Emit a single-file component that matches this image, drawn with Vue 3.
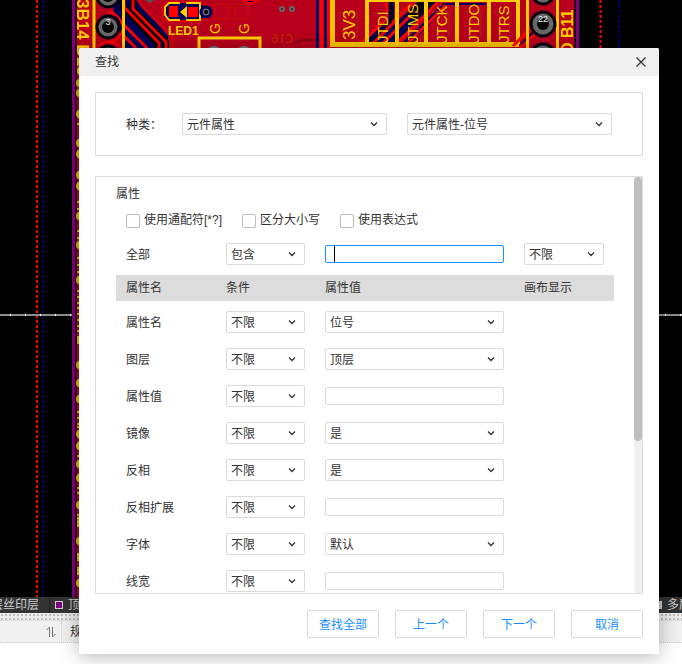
<script setup>
import { reactive } from 'vue'

const rows = reactive([
  { name: '属性名', value: '位号', select: true },
  { name: '图层', value: '顶层', select: true },
  { name: '属性值', value: '', select: false },
  { name: '镜像', value: '是', select: true },
  { name: '反相', value: '是', select: true },
  { name: '反相扩展', value: '', select: false },
  { name: '字体', value: '默认', select: true },
  { name: '线宽', value: '', select: false },
])
const options = ['使用通配符[*?]', '区分大小写', '使用表达式']
const actions = ['查找全部', '上一个', '下一个', '取消']

const pins = [
  { x: 388, name: 'JTDI' },
  { x: 418, name: 'JTMS' },
  { x: 447, name: 'JTCK' },
  { x: 479, name: 'JTDO' },
  { x: 509, name: 'JTRS' },
]
const walls = [367, 397, 426, 457, 489, 518]
const rounds = [83, 93, 114, 143, 154, 175, 186, 216, 245, 280, 365, 383, 399, 434, 446, 464, 478, 505, 541, 583]
const bars = [124, 202, 209, 231, 238, 258, 265, 272, 291, 297, 303, 308, 314, 320, 326, 331, 412, 418, 424, 427, 456, 488, 493, 515, 518]
const blocks = [336, 519, 553, 567]
</script>

<template>
  <div class="editor">
    <main class="canvas">
      <svg class="board" viewBox="0 0 682 597" preserveAspectRatio="xMinYMin slice" aria-hidden="true">
        <rect width="682" height="597" fill="#000" />
        <path d="M37 0V597M600.500 0V597" stroke="#f00" stroke-width="2" stroke-dasharray="3 2" />
        <path d="M43 0V597M619 0V597" stroke="#000066" stroke-width="2" stroke-dasharray="3 2" />
        <path d="M0 315H682" stroke="#8c8c8c" stroke-width="2" />
        <path d="M10 315H72M650 315H682" stroke="#fff" stroke-width="2" stroke-dasharray="1 14" />
        <rect x="72" width="507" height="597" fill="#800080" />
        <rect x="75" width="501" height="597" fill="#250018" />
        <rect x="77" width="497" height="597" fill="#b8001c" />
        <g fill="#e8b400">
          <ellipse v-for="y in rounds" :key="y" cx="79" :cy="y" rx="3" ry="4" />
          <rect v-for="y in bars" :key="y" x="77" :y="y - 1" width="3" height="2" />
          <rect v-for="y in blocks" :key="y" x="77" :y="y" width="3" height="8" />
        </g>

        <!-- left routing -->
        <path d="M112 0H137L168 36V48H125L114 12Z" fill="#000058" />
        <g fill="none" stroke="#000" stroke-width="6">
          <path d="M133 0V9L166 42V48" />
          <path d="M122 0V6L158 44V48" />
        </g>
        <g fill="none" stroke="#f00" stroke-width="3">
          <path d="M133 0V9L166 42V48" />
          <path d="M124 0V7L159 43V48" />
          <path d="M121 22L147 48" />
          <path d="M121 33L136 48" />
          <path d="M108 12C116 12 122 20 123 27C122 36 116 42 108 42M98 46C103 41 113 40 119 46" stroke-width="2" />
        </g>
        <path d="M138 0L143 7L172 36V48" fill="none" stroke="#d4000c" stroke-width="3" />
        <path d="M94 0V48M123.500 0V48" stroke="#fc0" stroke-width="3" />
        <g fill="#686868" stroke="#080010" stroke-width="3">
          <circle cx="108" cy="-4" r="11" />
          <circle cx="108" cy="27" r="11" />
          <circle cx="108" cy="57" r="11" />
        </g>
        <g fill="#080808">
          <circle cx="108" cy="-4" r="6" />
          <circle cx="108" cy="27" r="6" />
        </g>
        <text x="108" y="25" class="pin">3</text>
        <text class="silk bold" transform="translate(77 -1) rotate(90)">3B14 B13</text>

        <!-- LED footprint -->
        <path d="M145 0H154L150 3Z" fill="#555" />
        <path d="M168 2H198L207 6V18L198 21H168L163 17V6Z" fill="#000058" stroke="#e0000c" stroke-width="2" />
        <path d="M180 3H169L165 7V15L169 20H180M186 3H200V20H186" fill="none" stroke="#fc0" stroke-width="2" />
        <path d="M169 6H178V17H169ZM188 7H198V17H188Z" fill="#f00" />
        <path d="M180 12L187 6V18Z" fill="#fc0" />
        <circle cx="206" cy="12" r="5" fill="#686868" stroke="#000058" stroke-width="3" />
        <circle cx="206" cy="12" r="2" fill="#000" />
        <text x="168" y="35" class="silk led">LED1</text>
        <g fill="none" stroke="#c91000" stroke-width="1">
          <path d="M215 4H228V19H215ZM235 4H248V19H235ZM222 19L214 28M228 8H235" />
        </g>
        <path d="M244 0C245 4 255 4 257 0Z" fill="#000066" stroke="#f00" stroke-width="2" />
        <text class="silk" transform="translate(220 34) rotate(-90)">G</text>
        <text class="silk" transform="translate(249 34) rotate(-90)">G</text>
        <path d="M199 48V38H260V48" fill="none" stroke="#fc0" stroke-width="3" />
        <ellipse cx="214" cy="50" rx="6" ry="4" fill="#777" />
        <ellipse cx="244" cy="50" rx="6" ry="4" fill="#777" />
        <g fill="#222" stroke="#686868" stroke-width="2">
          <circle cx="282" cy="9" r="2" /><circle cx="292" cy="9" r="2" />
        </g>
        <text class="mirrored" transform="translate(293 43) scale(-1 1)">C16</text>
        <path d="M295 43L302 40H330" fill="none" stroke="#850012" stroke-width="2" />

        <!-- header connector -->
        <path d="M317.500 0V48M325.500 0V48" stroke="#000066" stroke-width="3" />
        <path d="M321.500 0V48M329 0V48" stroke="#f00" stroke-width="4" />
        <path d="M360 43L386 18V2H394V22L372 43ZM376 43L397 22L418 2H440L398 43Z" fill="#000058" />
        <path d="M402 43L444 3H486V5H448L412 43Z" fill="#000058" />
        <g fill="none" stroke="#f00" stroke-width="3">
          <path d="M361 43L387 19V2M372 43L412 3M383 43L424 2M397 43L438 2M408 43L446 5" />
        </g>
        <path d="M407 12L418 2H434L415 20Z" fill="#000" />
        <path d="M391 2V22L372 41" fill="none" stroke="#000" stroke-width="2" />
        <path d="M338 13H357V38M371 13H386V30M402 12H418V38M432 12H449V38M463 12H481V38M494 12H510V38" fill="none" stroke="#a5281c" stroke-width="1" />
        <path d="M332.500 0V44.500H519" fill="none" stroke="#f8c400" stroke-width="5" />
        <path v-for="x in walls" :key="x" :d="`M${x} 0V44`" stroke="#fc0" stroke-width="4" />
        <path d="M367 1H519" stroke="#fc0" stroke-width="2" />
        <text class="silk pinname wide" transform="translate(355 40) rotate(-90)">3V3</text>
        <text v-for="p in pins" :key="p.name" class="silk pinname" :transform="`translate(${p.x} 43) rotate(-90)`">{{ p.name }}</text>

        <!-- right rail -->
        <path d="M521 48L534 36V30L521 43Z" fill="#000058" />
        <path d="M513 46L536 23M520 48L535 34" stroke="#f00" stroke-width="3" />
        <path d="M527.500 0V48M557.500 0V48" stroke="#fc0" stroke-width="3" />
        <g fill="#686868" stroke="#080010" stroke-width="3">
          <circle cx="543" cy="-7" r="11" />
          <circle cx="543" cy="24" r="12" />
          <circle cx="543" cy="56" r="12" />
        </g>
        <circle cx="543" cy="24" r="6" fill="#080808" />
        <text x="543" y="22" class="pin">22</text>
        <text class="silk bold rail" transform="translate(573 38) rotate(-90)">B11</text>
        <text class="silk bold rail" transform="translate(573 54) rotate(-90)">D</text>
      </svg>
    </main>

    <nav class="layers" aria-label="图层">
      <span class="layer clipped">层丝印层</span>
      <span class="layer"><i class="swatch"></i>顶层</span>
      <span class="layer last"><i class="swatch multi"></i>多层</span>
    </nav>
    <div class="splitter"></div>
    <section class="grid-head">
      <span class="sort">
        <svg width="10" height="12" viewBox="0 0 10 12" aria-hidden="true">
          <path d="M0.500 4L3.500 1V11M6.500 1V11L9.500 8" fill="none" stroke="#777" />
        </svg>
      </span>
      <span class="head-text">规则</span>
    </section>
    <footer class="grid-body"></footer>

    <section class="dialog" role="dialog" aria-labelledby="dialog-title">
      <header class="titlebar">
        <h1 id="dialog-title">查找</h1>
        <button class="close" type="button" aria-label="关闭">
          <svg width="10" height="10" viewBox="0 0 10 10" aria-hidden="true">
            <path d="M0.500 0.500L9.500 9.500M9.500 0.500L0.500 9.500" stroke="#333" stroke-width="1.200" />
          </svg>
        </button>
      </header>

      <div class="kind">
        <label for="kind">种类：</label>
        <select id="kind"><option>元件属性</option></select>
        <select aria-label="属性种类"><option>元件属性-位号</option></select>
      </div>

      <div class="panel">
        <div class="panel-content">
          <h2>属性</h2>
          <div class="checks">
            <label v-for="o in options" :key="o"><input type="checkbox" />{{ o }}</label>
          </div>
          <div class="cols all">
            <label for="all-value">全部</label>
            <select aria-label="全部条件"><option>包含</option></select>
            <span class="focused"><input id="all-value" type="text" /></span>
            <select aria-label="全部画布显示"><option>不限</option></select>
          </div>
          <table>
            <thead>
              <tr class="cols">
                <th>属性名</th><th>条件</th><th>属性值</th><th>画布显示</th>
              </tr>
            </thead>
            <tbody>
              <tr v-for="(r, i) in rows" :key="r.name" class="cols">
                <td><label :for="'value-' + i">{{ r.name }}</label></td>
                <td><select :aria-label="r.name + '条件'"><option>不限</option></select></td>
                <td>
                  <select v-if="r.select" :id="'value-' + i"><option>{{ r.value }}</option></select>
                  <input v-else :id="'value-' + i" v-model="r.value" type="text" />
                </td>
                <td></td>
              </tr>
            </tbody>
          </table>
        </div>
        <div class="track"><div class="thumb"></div></div>
      </div>

      <div class="actions">
        <button v-for="a in actions" :key="a" type="button">{{ a }}</button>
      </div>
    </section>
  </div>
</template>

<style>
body {
  margin: 0;
  overflow: hidden;
}
</style>

<style scoped>
* {
  box-sizing: border-box;
}
.editor {
  position: relative;
  display: flex;
  flex-direction: column;
  height: 100vh;
  background: #fff;
  color: #333;
  font: 12px/18px "Liberation Sans", "Noto Sans CJK SC", sans-serif;
}
.canvas {
  flex: 1;
  min-height: 0;
  overflow: hidden;
  background: #000;
}
.board {
  display: block;
  width: 100%;
  height: 100%;
}
.silk {
  fill: #fc0;
  font: 14px "Liberation Sans", sans-serif;
}
.bold {
  font-size: 17px;
  font-weight: 700;
}
.rail {
  font-size: 16px;
}
.led {
  font-size: 12px;
  font-weight: 700;
}
.pinname {
  font-size: 15px;
}
.wide {
  font-size: 17px;
}
.pin {
  fill: #eee;
  font: 9px "Liberation Sans", sans-serif;
  text-anchor: middle;
}
.mirrored {
  fill: #c82a00;
  font: 12px "Noto Sans", sans-serif;
}
.layers {
  display: flex;
  height: 16px;
  overflow: hidden;
  background: #333;
  color: #ccc;
}
.layer {
  display: flex;
  align-items: center;
  gap: 5px;
  padding-left: 5px;
  white-space: nowrap;
}
.clipped {
  justify-content: flex-end;
  width: 50px;
  padding: 0 10px 0 0;
  border-right: 1px solid #222;
}
.last {
  width: 33px;
  margin-left: auto;
}
.swatch {
  flex: none;
  width: 8px;
  height: 8px;
  border: 1px solid #ccc;
  background: #800080;
}
.multi {
  background: #c0c0c0;
}
.splitter {
  height: 7px;
  background-color: #eee;
  background-image: radial-gradient(circle, #bbb 1px, transparent 1px);
  background-size: 4px 4px;
}
.grid-head {
  display: flex;
  align-items: center;
  height: 23px;
  border-top: 1px dotted #ccc;
  border-bottom: 1px dotted #ccc;
  background: #f0f0f0;
}
.sort {
  display: flex;
  align-items: center;
  justify-content: flex-end;
  width: 62px;
  height: 100%;
  padding-right: 5px;
  border-right: 1px dotted #ccc;
}
.head-text {
  padding-left: 8px;
}
.grid-body {
  height: 21px;
  background: #fff;
}

.dialog {
  position: absolute;
  inset: 48px 23px 10px 79px;
  display: flex;
  flex-direction: column;
  border-radius: 2px 2px 0 0;
  background: #fff;
  box-shadow: 0 2px 20px rgba(0, 0, 0, 0.3);
}
.titlebar {
  display: flex;
  align-items: center;
  justify-content: space-between;
  height: 28px;
  padding: 0 8px 0 16px;
  border-radius: 2px 2px 0 0;
  background: #f0f0f0;
}
h1,
h2 {
  margin: 0;
  font-size: 12px;
  font-weight: 400;
}
h2 {
  line-height: 34px;
}
.close {
  display: flex;
  align-items: center;
  justify-content: center;
  width: 20px;
  height: 20px;
  padding: 0;
  border: 0;
  background: none;
}
.kind {
  display: grid;
  grid-template-columns: 36px 1fr 1fr;
  gap: 20px;
  align-items: center;
  margin: 16px 16px 20px;
  padding: 20px 30px;
  border: 1px solid #dcdcdc;
}
select,
input[type="text"] {
  display: block;
  width: 100%;
  min-width: 0;
  margin: 0;
  border: 1px solid #dadada;
  border-radius: 2px;
  outline: none;
  background: #fff;
  color: #333;
  font: inherit;
}
select {
  height: 22px;
  padding: 2px 20px 0 4px;
  appearance: none;
  background: #fff url("data:image/svg+xml,%3Csvg xmlns='http://www.w3.org/2000/svg' width='8' height='6'%3E%3Cpath d='M1 1.500L4 4.500L7 1.500' fill='none' stroke='%23333' stroke-width='1.300'/%3E%3C/svg%3E") no-repeat right 8px top 7px;
}
input[type="text"] {
  height: 18px;
  padding: 0 8px;
}
.kind label,
.all label,
th,
tbody .cols td:first-child {
  padding-top: 2px;
}
.panel {
  display: flex;
  flex: 1;
  min-height: 0;
  margin: 0 16px;
  border: 1px solid #dcdcdc;
}
.panel-content {
  flex: 1;
  min-width: 0;
  padding: 0 20px;
  overflow: hidden;
}
.track {
  width: 8px;
  background: #f0f0f0;
}
.thumb {
  height: 264px;
  border-radius: 4px;
  background: #bfbfbf;
}
.checks {
  display: flex;
  gap: 20px;
  height: 20px;
  padding-left: 10px;
}
.checks label {
  display: flex;
  gap: 4px;
  white-space: nowrap;
}
input[type="checkbox"] {
  width: 14px;
  height: 14px;
  margin: 3px 0 0;
  border: 1px solid #bbb;
  border-radius: 2px;
  appearance: none;
  background: #fff;
}
.cols {
  display: grid;
  grid-template-columns: 80px 79px 1fr 80px;
  gap: 20px;
  align-items: center;
  padding: 0 10px;
}
.all {
  margin: 12px 0 10px;
}
.focused {
  position: relative;
}
.focused input[type="text"] {
  border-color: #1890ff;
}
.focused::after {
  position: absolute;
  top: 1px;
  left: 9px;
  width: 1px;
  height: 16px;
  background: #000;
  content: "";
}
table,
thead,
tbody {
  display: block;
}
thead .cols {
  height: 26px;
  background: #dcdcdc;
}
tbody .cols {
  padding-top: 10px;
  padding-bottom: 5px;
}
th,
td {
  padding: 0;
  font-weight: 400;
  text-align: left;
}
tbody .cols td:first-child {
  height: 22px;
  line-height: 20px;
}
.actions {
  display: flex;
  gap: 16px;
  justify-content: flex-end;
  padding: 16px;
}
.actions button {
  width: 72px;
  height: 28px;
  padding: 2px 0 0;
  border: 1px solid #dadada;
  border-radius: 2px;
  background: #fff;
  color: #1890ff;
  font: inherit;
}
</style>
